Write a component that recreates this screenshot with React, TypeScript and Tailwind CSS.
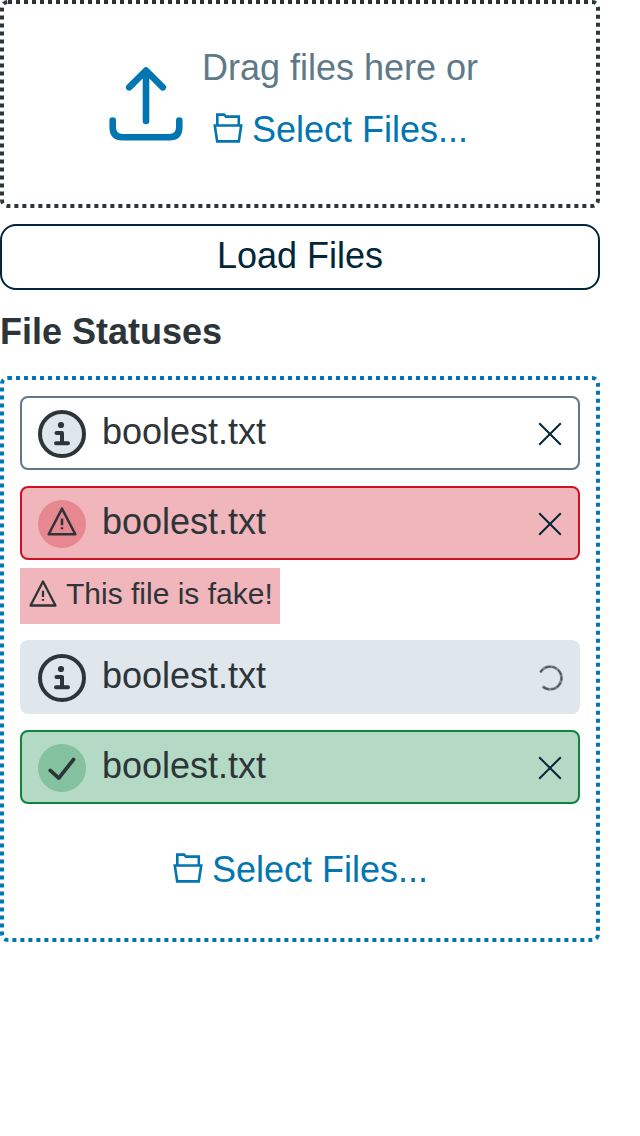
import type { ReactNode } from "react";

const zone =
  "relative w-[600px] before:pointer-events-none before:absolute before:left-0 before:top-0 before:h-1/2 before:w-1/2 before:origin-top-left before:scale-200 before:rounded-[4px] before:border-2 before:border-dotted before:content-['']";

function UploadIcon() {
  return (
    <svg width="80" height="80" viewBox="0 0 80 80" fill="none" stroke="#0276b1" strokeWidth="6.6" strokeLinecap="round" strokeLinejoin="round">
      <path d="M40 57V7M23.2 23.3 40 6.5l16.8 16.8" />
      <path d="M6.7 56.6v6.7q0 10 10 10h46.6q10 0 10-10v-6.7" />
    </svg>
  );
}

function FolderIcon() {
  return (
    <svg className="-mt-1" width="32" height="32" viewBox="0 0 32 32" fill="none" stroke="#0276b1" strokeWidth="2.6">
      <path d="M5.3 13.5V2.6H12l2 2h12.8v8.9" />
      <path d="M2.8 13.5h26.4l-2.4 15.9H5.2Z" />
    </svg>
  );
}

function InfoIcon() {
  return (
    <svg width="48" height="48" viewBox="0 0 48 48" fill="none" stroke="#2d3538" strokeWidth="4" strokeLinecap="round" strokeLinejoin="round">
      <circle cx="24" cy="24" r="22" />
      <circle cx="23" cy="15" r="3.1" fill="#2d3538" stroke="none" />
      <path d="M18.5 23H24v10M18 33.3h12" />
    </svg>
  );
}

function WarningIcon({ size, className }: { size: number; className?: string }) {
  return (
    <svg className={className} width={size} height={size} viewBox="0 0 32 32" fill="none" stroke="#2d3538" strokeWidth="2.5" strokeLinejoin="round">
      <path d="M16 2.6 29.3 28.3H2.7Z" />
      <path d="M16 12.6v6.6M16 21.3v2" />
    </svg>
  );
}

function CheckIcon() {
  return (
    <svg width="48" height="48" viewBox="0 0 48 48" fill="none" stroke="#2d3538" strokeWidth="3.7" strokeLinecap="round" strokeLinejoin="round">
      <path d="m12.2 26.4 8.6 7.7 14.8-18.7" />
    </svg>
  );
}

function CloseIcon() {
  return (
    <svg width="24" height="24" viewBox="0 0 24 24" fill="none" stroke="#012639" strokeWidth="2">
      <path d="m1.2 1.2 21.6 21.6M22.8 1.2 1.2 22.8" />
    </svg>
  );
}

function Spinner() {
  return (
    <svg className="shrink-0" width="28" height="28" viewBox="0 0 28 28" fill="none">
      <path d="M4.4 8.4A11.3 11.3 0 1 1 6.7 22.4" stroke="#858c90" strokeWidth="2.8" />
      <path d="M4.4 8.4A11.3 11.3 0 1 1 6.7 22.4" stroke="#4d5457" strokeWidth="1.5" strokeDasharray="4 2.5 6 1.5" />
    </svg>
  );
}

function SelectFiles() {
  return (
    <button className="flex h-10 items-center gap-2 text-[#0276b1]">
      <FolderIcon />
      <span>Select Files...</span>
    </button>
  );
}

function FileRow({ className, badge, icon, action }: { className: string; badge: string; icon: ReactNode; action: ReactNode }) {
  return (
    <div className={`flex h-[74px] items-center rounded-lg border-2 px-4 pt-0.5 ${className}`}>
      <span className={`flex size-12 items-center justify-center rounded-full ${badge}`}>{icon}</span>
      <span className="ml-4 -mt-1">boolest.txt</span>
      <span className="ml-auto flex w-6 justify-center">{action}</span>
    </div>
  );
}

export default function App() {
  return (
    <main className="min-h-[1136px] bg-white font-['Liberation_Sans',sans-serif] text-[36px] leading-[40px] text-[#2d3538]">
      <section className={`${zone} flex h-52 justify-center gap-4 pr-4 pt-12 before:border-[#2d3538]`}>
        <div className="pt-4">
          <UploadIcon />
        </div>
        <div className="flex flex-col gap-[22px]">
          <span className="text-[#5e7a88]">Drag files here or</span>
          <div className="pl-[10px]">
            <SelectFiles />
          </div>
        </div>
      </section>

      <button className="mt-4 flex h-[66px] w-[600px] items-center justify-center rounded-2xl border-2 border-[#012639] pb-0.5 text-[#012639]">
        Load Files
      </button>

      <h2 className="mt-[22px] font-bold">File Statuses</h2>

      <section className={`${zone} mt-6 h-[566px] px-5 pt-5 before:border-[#0276b1]`}>
        <FileRow className="border-[#5e7a88] bg-white" badge="bg-[#dfe6ec]" icon={<InfoIcon />} action={<CloseIcon />} />
        <FileRow className="mt-4 border-[#cf1124] bg-[#f1b6bc]" badge="bg-[#e78891]" icon={<WarningIcon size={32} className="-mt-[5px]" />} action={<CloseIcon />} />
        <div className="mt-2 flex h-14 w-[260px] items-center gap-2 bg-[#f1b6bc] pb-1 pl-2 text-[30px]">
          <WarningIcon size={30} />
          <span>This file is fake!</span>
        </div>
        <FileRow className="mt-4 border-[#dfe6ec] bg-[#dfe6ec]" badge="bg-[#dfe6ec]" icon={<InfoIcon />} action={<Spinner />} />
        <FileRow className="mt-4 border-[#0b8540] bg-[#b4dac5]" badge="bg-[#84c19e]" icon={<CheckIcon />} action={<CloseIcon />} />
        <div className="mt-[46px] flex justify-center">
          <SelectFiles />
        </div>
      </section>
    </main>
  );
}
